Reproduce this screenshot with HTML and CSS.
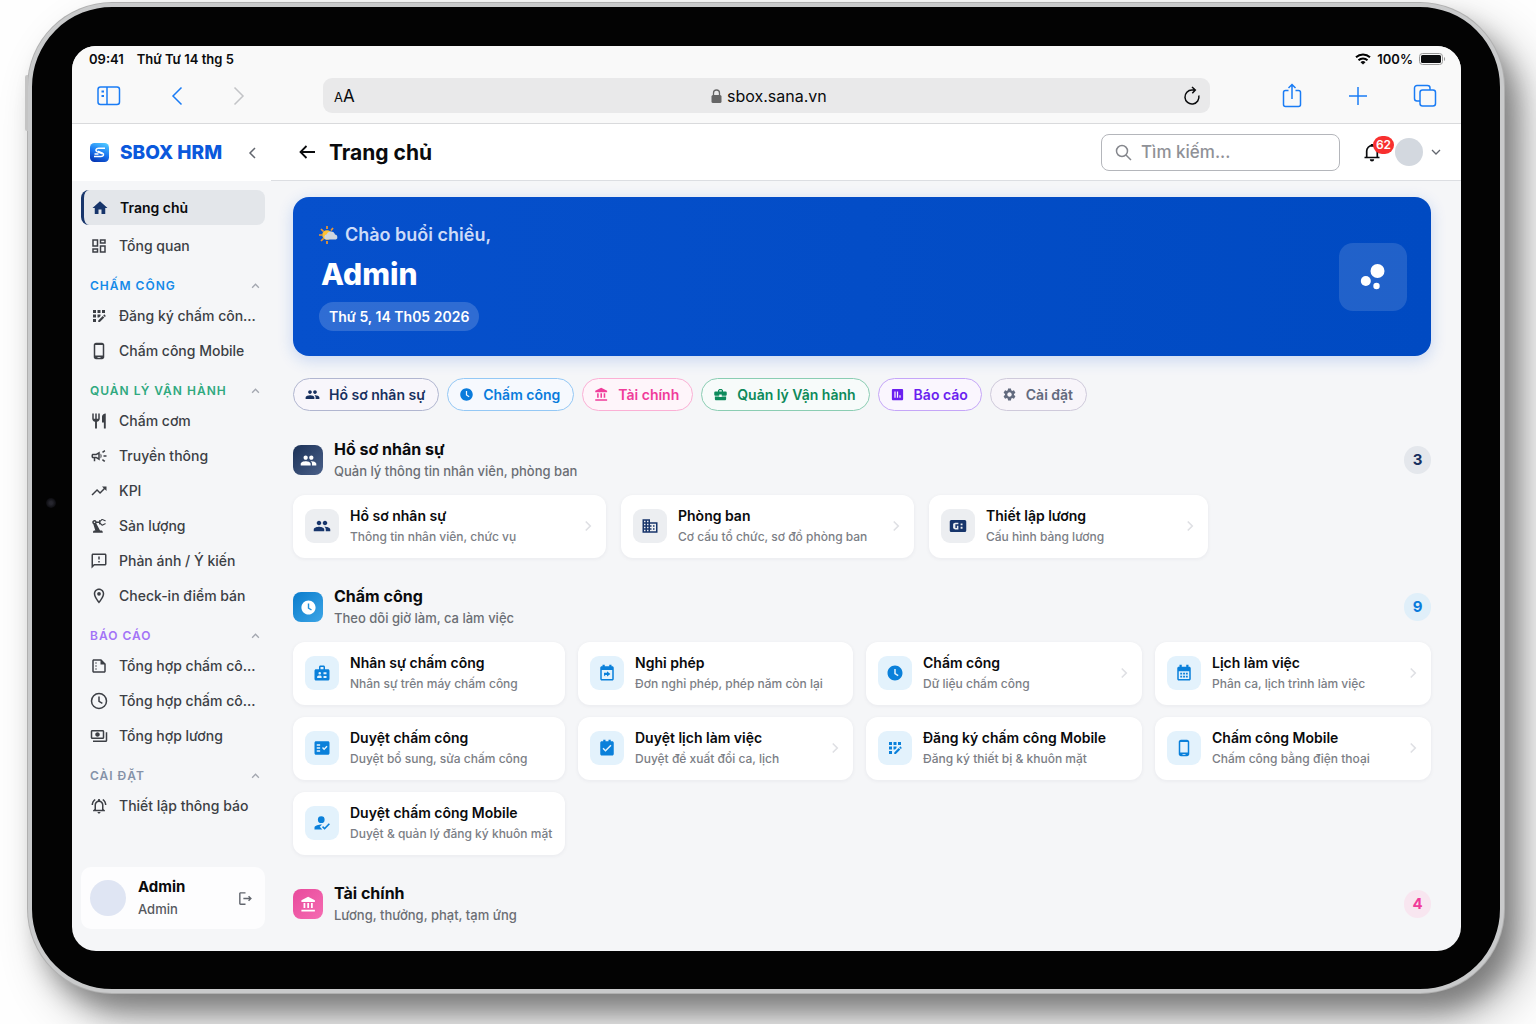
FILE: index.html
```html
<!DOCTYPE html>
<html lang="vi">
<head>
    <meta charset="UTF-8">
    <meta name="viewport" content="width=device-width, initial-scale=1.0">
    <title>SBOX HRM - Trang chủ</title>
    <link rel="stylesheet" href="styles.css">
</head>
<body>
    <!-- icon sprite -->
    <svg class="sprite" aria-hidden="true">
        <symbol id="i-home" viewBox="0 0 24 24"><path d="M10 20v-6h4v6h5v-8h3L12 3 2 12h3v8z"/></symbol>
        <symbol id="i-dashboard" viewBox="0 0 24 24"><path d="M19 5v2h-4V5h4M9 5v6H5V5h4m10 8v6h-4v-6h4M9 17v2H5v-2h4M21 3h-8v6h8V3zM11 3H3v10h8V3zm10 8h-8v10h8V11zm-10 4H3v6h8v-6z"/></symbol>
        <symbol id="i-register" viewBox="0 0 24 24"><path d="M10 4h4v4h-4zM4 16h4v4H4zM4 10h4v4H4zM4 4h4v4H4zM16 4h4v4h-4zM11 17.86V20h2.1l5.98-5.97-2.12-2.12zM14 12.03V10h-4v4h2.03zM20.85 11.56l-1.41-1.41c-.2-.2-.51-.2-.71 0l-1.06 1.06 2.12 2.12 1.06-1.06c.2-.2.2-.51 0-.71z"/></symbol>
        <symbol id="i-phone" viewBox="0 0 24 24"><path d="M16 1H8C6.34 1 5 2.34 5 4v16c0 1.66 1.34 3 3 3h8c1.66 0 3-1.34 3-3V4c0-1.66-1.34-3-3-3zm1 17H7V4h10v14zm-3 3h-4v-1h4v1z"/></symbol>
        <symbol id="i-food" viewBox="0 0 24 24"><path d="M11 9H9V2H7v7H5V2H3v7c0 2.12 1.66 3.84 3.75 3.97V22h2.5v-9.03C11.34 12.84 13 11.12 13 9V2h-2v7zm5-3v8h2.5v8H21V2c-2.76 0-5 2.24-5 4z"/></symbol>
        <symbol id="i-campaign" viewBox="0 0 24 24"><path d="M18 11v2h4v-2h-4zm-2 6.61c.96.71 2.21 1.65 3.2 2.39.4-.53.8-1.07 1.2-1.6-.99-.74-2.24-1.68-3.2-2.4-.4.54-.8 1.08-1.2 1.61zM20.4 5.6c-.4-.53-.8-1.07-1.2-1.6-.99.74-2.24 1.68-3.2 2.4.4.53.8 1.07 1.2 1.6.96-.72 2.21-1.65 3.2-2.4zM4 9c-1.1 0-2 .9-2 2v2c0 1.1.9 2 2 2h1v4h2v-4h1l5 3V6L8 9H4zm5.03 1.71L11 9.53v4.94l-1.97-1.18-.48-.29H4v-2h4.55l.48-.29zM15.5 12c0-1.33-.58-2.53-1.5-3.35v6.69c.92-.81 1.5-2.01 1.5-3.34z"/></symbol>
        <symbol id="i-trend" viewBox="0 0 24 24"><path d="M16 6l2.29 2.29-4.88 4.88-4-4L2 16.59 3.41 18l6-6 4 4 6.3-6.29L22 12V6z"/></symbol>
        <symbol id="i-robot-arm" viewBox="0 0 24 24"><path fill-rule="evenodd" d="M19.93 8.35l-3.6 1.68L14 7.7V6.3l2.33-2.33 3.6 1.68c.38.18.82.01 1-.36.18-.38.01-.82-.36-1L16.65 2.6c-.38-.18-.83-.1-1.13.2l-1.74 1.74C13.6 4.22 13.32 4 13 4c-.55 0-1 .45-1 1v1H8.82C8.4 4.84 7.3 4 6 4 4.34 4 3 5.34 3 7c0 1.1.6 2.05 1.48 2.58L7.08 18H6c-1.1 0-2 .9-2 2v1h13v-1c0-1.1-.9-2-2-2h-1.62L8.41 8.77c.17-.24.31-.49.41-.77H12v1c0 .55.45 1 1 1 .32 0 .6-.16.78-.4l1.74 1.74c.3.3.75.38 1.13.2l3.92-1.83c.38-.18.54-.62.36-1-.18-.37-.62-.54-1-.36zM6 6a1 1 0 1 1 0 2 1 1 0 0 1 0-2z"/></symbol>
        <symbol id="i-feedback" viewBox="0 0 24 24"><path d="M20 2H4c-1.1 0-2 .9-2 2v18l4-4h14c1.1 0 2-.9 2-2V4c0-1.1-.9-2-2-2zm0 14H5.17L4 17.17V4h16v12zm-9-4h2v2h-2zm0-6h2v4h-2z"/></symbol>
        <symbol id="i-place" viewBox="0 0 24 24"><path d="M12 2C8.13 2 5 5.13 5 9c0 5.25 7 13 7 13s7-7.75 7-13c0-3.87-3.13-7-7-7zM7 9c0-2.76 2.24-5 5-5s5 2.24 5 5c0 2.88-2.88 7.19-5 9.88C9.92 16.21 7 11.85 7 9z"/><circle cx="12" cy="9" r="2.5"/></symbol>
        <symbol id="i-summary" viewBox="0 0 24 24"><path d="M15 3H5c-1.1 0-2 .9-2 2v14c0 1.1.9 2 2 2h14c1.1 0 2-.9 2-2V9l-6-6zM5 19V5h9v5h5v9H5z"/><circle cx="8" cy="8" r="1"/><circle cx="8" cy="12" r="1"/><circle cx="8" cy="16" r="1"/></symbol>
        <symbol id="i-clock" viewBox="0 0 24 24"><g fill="none" stroke="currentColor" stroke-width="2"><circle cx="12" cy="12" r="10"/><path d="M12 6v6.5l4.5 2.7"/></g></symbol>
        <symbol id="i-payments" viewBox="0 0 24 24"><path d="M19 14V6c0-1.1-.9-2-2-2H3c-1.1 0-2 .9-2 2v8c0 1.1.9 2 2 2h14c1.1 0 2-.9 2-2zm-2 0H3V6h14v8zm-7-7c-1.66 0-3 1.34-3 3s1.34 3 3 3 3-1.34 3-3-1.34-3-3-3zm13 0v11c0 1.1-.9 2-2 2H4v-2h17V7h2z"/></symbol>
        <symbol id="i-alert" viewBox="0 0 24 24"><path d="M12 22c1.1 0 2-.9 2-2h-4c0 1.1.9 2 2 2zm6-6v-5c0-3.07-1.63-5.64-4.5-6.32V4c0-.83-.67-1.5-1.5-1.5s-1.5.67-1.5 1.5v.68C7.64 5.36 6 7.92 6 11v5l-2 2v1h16v-1l-2-2zm-2 1H8v-6c0-2.48 1.51-4.5 4-4.5s4 2.02 4 4.5v6zM7.58 4.08L6.15 2.65C3.75 4.48 2.17 7.3 2.03 10.5h2c.15-2.65 1.51-4.97 3.55-6.42zm12.39 6.42h2c-.15-3.2-1.73-6.02-4.12-7.85l-1.42 1.43c2.02 1.45 3.39 3.77 3.54 6.42z"/></symbol>
        <symbol id="i-logout" viewBox="0 0 24 24"><path d="M17 8l-1.41 1.41L17.17 11H9v2h8.17l-1.58 1.58L17 16l4-4-4-4zM5 5h7V3H5c-1.1 0-2 .9-2 2v14c0 1.1.9 2 2 2h7v-2H5V5z"/></symbol>
        <symbol id="i-people" viewBox="0 0 24 24"><path d="M16 11c1.66 0 2.99-1.34 2.99-3S17.66 5 16 5s-3 1.34-3 3 1.34 3 3 3zm-8 0c1.66 0 2.99-1.34 2.99-3S9.66 5 8 5 5 6.34 5 8s1.34 3 3 3zm0 2c-2.33 0-7 1.17-7 3.5V19h14v-2.5c0-2.33-4.67-3.5-7-3.5zm8 0c-.29 0-.62.02-.97.05 1.16.84 1.97 1.97 1.97 3.45V19h6v-2.5c0-2.33-4.67-3.5-7-3.5z"/></symbol>
        <symbol id="i-time" viewBox="0 0 24 24"><path fill-rule="evenodd" d="M12 2C6.5 2 2 6.5 2 12s4.5 10 10 10 10-4.5 10-10S17.5 2 12 2zm3.7 14.3L11 13.3V6.5h2v5.8l3.8 2.4z"/></symbol>
        <symbol id="i-bank" viewBox="0 0 24 24"><path d="M5 10v7h2.5v-7H5zm5.3 0v7h2.5v-7h-2.5zM2 22h19v-2.5H2V22zm13.5-12v7H18v-7h-2.5zM11.5 1L2 6v2.5h19V6l-9.5-5z"/></symbol>
        <symbol id="i-briefcase" viewBox="0 0 24 24"><path d="M10 16v-1H3v4c0 1.11.89 2 2 2h14c1.11 0 2-.89 2-2v-4h-7v1h-4zm10-9h-4V5l-2-2h-4L8 5v2H4c-1.1 0-2 .9-2 2v3c0 1.11.89 2 2 2h6v-2h4v2h6c1.1 0 2-.9 2-2V9c0-1.1-.9-2-2-2zm-6 0h-4V5h4v2z"/></symbol>
        <symbol id="i-chart" viewBox="0 0 24 24"><path d="M19 3H5c-1.1 0-2 .9-2 2v14c0 1.1.9 2 2 2h14c1.1 0 2-.9 2-2V5c0-1.1-.9-2-2-2zM9 17H7V7h2v10zm4 0h-2V7h2v10zm4 0h-2v-4h2v4z"/></symbol>
        <symbol id="i-gear" viewBox="0 0 24 24"><path d="M19.14 12.94c.04-.3.06-.61.06-.94 0-.32-.02-.64-.07-.94l2.03-1.58c.18-.14.23-.41.12-.61l-1.92-3.32c-.12-.22-.37-.29-.59-.22l-2.39.96c-.5-.38-1.03-.7-1.62-.94l-.36-2.54c-.04-.24-.24-.41-.48-.41h-3.84c-.24 0-.43.17-.47.41l-.36 2.54c-.59.24-1.13.57-1.62.94l-2.39-.96c-.22-.08-.47 0-.59.22L2.74 8.87c-.12.21-.08.47.12.61l2.03 1.58c-.05.3-.09.63-.09.94s.02.64.07.94l-2.03 1.58c-.18.14-.23.41-.12.61l1.92 3.32c.12.22.37.29.59.22l2.39-.96c.5.38 1.03.7 1.62.94l.36 2.54c.05.24.24.41.48.41h3.84c.24 0 .44-.17.47-.41l.36-2.54c.59-.24 1.13-.56 1.62-.94l2.39.96c.22.08.47 0 .59-.22l1.92-3.32c.12-.22.07-.47-.12-.61l-2.01-1.58zM12 15.6c-1.98 0-3.6-1.62-3.6-3.6s1.62-3.6 3.6-3.6 3.6 1.62 3.6 3.6-1.62 3.6-3.6 3.6z"/></symbol>
        <symbol id="i-building" viewBox="0 0 24 24"><path d="M12 7V3H2v18h20V7H12zM6 19H4v-2h2v2zm0-4H4v-2h2v2zm0-4H4V9h2v2zm0-4H4V5h2v2zm4 12H8v-2h2v2zm0-4H8v-2h2v2zm0-4H8V9h2v2zm0-4H8V5h2v2zm10 12h-8v-2h2v-2h-2v-2h2v-2h-2V9h8v10zm-2-8h-2v2h2v-2zm0 4h-2v2h2v-2z"/></symbol>
        <symbol id="i-salary" viewBox="0 0 24 24"><path fill-rule="evenodd" d="M3 4h18a2 2 0 0 1 2 2v12a2 2 0 0 1-2 2H3a2 2 0 0 1-2-2V6a2 2 0 0 1 2-2zM8 7.5L5.5 9v6L8 16.5h4.5v-5h-2v3h-2v-5h4v-2zM15.5 8.5V11H18V8.5zM15.5 13v2.5H18V13z"/></symbol>
        <symbol id="i-badge" viewBox="0 0 24 24"><path fill-rule="evenodd" d="M20 7h-4V4c0-1.1-.9-2-2-2h-4c-1.1 0-2 .9-2 2v3H4c-1.1 0-2 .9-2 2v11c0 1.1.9 2 2 2h16c1.1 0 2-.9 2-2V9c0-1.1-.9-2-2-2zm-10 0V4h4v3h-4zM9 10.5a1.7 1.7 0 1 1 0 3.4 1.7 1.7 0 0 1 0-3.4zM5.5 18.5V17c0-1 2-1.7 3.5-1.7s2.5.7 2.5 1.7v1.5zM14 11h4v2.5h-4zM14 16h4v2.5h-4z"/></symbol>
        <symbol id="i-leave" viewBox="0 0 24 24"><path fill-rule="evenodd" d="M19 3h-1V1h-3v2H9V1H6v2H5c-1.1 0-2 .9-2 2v15c0 1.1.9 2 2 2h14c1.1 0 2-.9 2-2V5c0-1.1-.9-2-2-2zm0 17H5V8h14v12z"/><path d="M8 11.5h4v-2l4.5 3.7-4.5 3.3v-2H9.5v2L8 15z"/></symbol>
        <symbol id="i-calendar" viewBox="0 0 24 24"><path fill-rule="evenodd" d="M19 3.5h-1V1h-3v2.5H9V1H6v2.5H5c-1.1 0-2 .9-2 2V20c0 1.1.9 2 2 2h14c1.1 0 2-.9 2-2V5.5c0-1.1-.9-2-2-2zM19 20H5V9.5h14V20z"/><path d="M7 11.5h2.5V14H7zM10.8 11.5h2.5V14h-2.5zM14.500 11.500H17V14h-2.500zM7 15.500h2.500V18H7zM10.800 15.500h2.500V18h-2.500zM14.500 15.500H17V18h-2.500z"/></symbol>
        <symbol id="i-fact" viewBox="0 0 24 24"><path fill-rule="evenodd" d="M20 3H4c-1.1 0-2 .9-2 2v14c0 1.1.9 2 2 2h16c1.1 0 2-.9 2-2V5c0-1.1-.9-2-2-2zM9.5 17H5v-2h4.5v2zm0-4H5v-2h4.5v2zm0-4H5V7h4.5v2zm5.320 6L12 12.160l1.410-1.410 1.410 1.420L17.990 9l1.420 1.420L14.820 15z"/></symbol>
        <symbol id="i-approved" viewBox="0 0 24 24"><path d="M19 3h-2V1h-3v2h-4V1H7v2H5c-1.1 0-2 .9-2 2v15c0 1.1.9 2 2 2h14c1.1 0 2-.9 2-2V5c0-1.1-.9-2-2-2zm-9 14l-4-4 1.410-1.410L10 14.170l6.590-6.590L18 9l-8 8z"/></symbol>
        <symbol id="i-user-check" viewBox="0 0 24 24"><circle cx="11" cy="7.5" r="4.5"/><path d="M9 17l3-2.940c-.39-.04-.68-.06-1-.06-2.670 0-9 1.340-9 4v2.500h10.500L9 17zm6.470 4L12 17.500l1.400-1.600 2.070 2.080L21 12.200l1.600 1.500z"/></symbol>
        <symbol id="i-chevron" viewBox="0 0 10 16"><path d="M2 2l6 6-6 6" fill="none" stroke="currentColor" stroke-width="2.2"/></symbol>
        <symbol id="i-up" viewBox="0 0 16 10"><path d="M2 8l6-6 6 6" fill="none" stroke="currentColor" stroke-width="2.4"/></symbol>
    </svg>

    <div class="device">
        <div class="screen">
            <div class="status-bar">
                <span>09:41</span>
                <span>Thứ Tư 14 thg 5</span>
                <span class="status-right">
                    <svg class="wifi" viewBox="0 0 16 12"><path d="M1 4.300a10.200 10.200 0 0 1 14 0M3.500 7.200a6.600 6.600 0 0 1 9 0" fill="none" stroke="#000" stroke-width="2"/><path d="M8 11.500L5.500 9.200a3.700 3.700 0 0 1 5 0z"/></svg>
                    100%
                    <svg class="battery" viewBox="0 0 27 12"><rect x=".5" y=".5" width="23" height="11" rx="3" fill="none" stroke="#999"/><rect x="2" y="2" width="20" height="8" rx="1.500"/><path d="M25 4v4c1.500-.6 1.500-3.400 0-4z" fill="#999"/></svg>
                </span>
            </div>

            <div class="browser-bar">
                <div class="browser-nav">
                    <button class="icon-btn" aria-label="Thanh bên"><svg width="24" height="20" viewBox="0 0 24 20"><g fill="none" stroke="currentColor" stroke-width="1.500"><rect x="1" y="1" width="21.500" height="17.500" rx="2.500"/><path d="M10 1v17.500"/></g><path d="M4.500 4.500h2.500v2H4.500zM4.500 9h2.500v2H4.500z"/></svg></button>
                    <button class="icon-btn" aria-label="Quay lại"><svg width="12" height="20" viewBox="0 0 12 20"><path d="M10.500 1.500L2 10l8.500 8.500" fill="none" stroke="currentColor" stroke-width="1.500"/></svg></button>
                    <button class="icon-btn muted" aria-label="Tiếp"><svg width="12" height="20" viewBox="0 0 12 20"><path d="M1.500 1.500L10 10l-8.500 8.500" fill="none" stroke="currentColor" stroke-width="1.500"/></svg></button>
                </div>
                <div class="address-bar">
                    <button class="text-size" aria-label="Cỡ chữ"><small>A</small>A</button>
                    <button class="address">
                        <svg width="11" height="14" viewBox="0 0 11 14"><rect x=".5" y="6" width="10" height="8" rx="1.500" fill="#666"/><path d="M2.500 6.500V4a3 3 0 0 1 6 0v2.500" fill="none" stroke="#666" stroke-width="1.300"/></svg>
                        sbox.sana.vn
                    </button>
                    <button class="icon-btn dark" aria-label="Tải lại"><svg width="18" height="20" viewBox="0 0 18 20"><path d="M15.800 9.500A7 7 0 1 1 9 4h3M9 1l3.300 3L9.300 7.200" fill="none" stroke="currentColor" stroke-width="1.500"/></svg></button>
                </div>
                <div class="browser-actions">
                    <button class="icon-btn" aria-label="Chia sẻ"><svg width="20" height="25" viewBox="0 0 20 25"><path d="M6.500 7.500H3.500a2 2 0 0 0-2 2v12a2 2 0 0 0 2 2h13a2 2 0 0 0 2-2v-12a2 2 0 0 0-2-2h-3M10 16V1.500M6.500 5L10 1.500 13.500 5" fill="none" stroke="currentColor" stroke-width="1.500"/></svg></button>
                    <button class="icon-btn" aria-label="Thẻ mới"><svg width="18" height="18" viewBox="0 0 18 18"><path d="M9 0v18M0 9h18" fill="none" stroke="currentColor" stroke-width="1.500"/></svg></button>
                    <button class="icon-btn" aria-label="Các thẻ"><svg width="24" height="24" viewBox="0 0 24 24"><g fill="none" stroke="currentColor" stroke-width="1.500"><rect x="7" y="6" width="15.500" height="16" rx="2.500"/><path d="M7 17H4a2.500 2.500 0 0 1-2.500-2.500V4A2.500 2.500 0 0 1 4 1.500h10.500A2.500 2.500 0 0 1 17 4v2"/></g></svg></button>
                </div>
            </div>

            <div class="app">
                <aside class="sidebar">
                    <div class="brand">
                        <svg class="logo" viewBox="0 0 19 19">
                            <defs><linearGradient id="logo-fill" x1=".7" y1="0" x2=".3" y2="1"><stop offset="0" stop-color="#4cc4ff"/><stop offset=".5" stop-color="#1b78f2"/><stop offset="1" stop-color="#0637b5"/></linearGradient></defs>
                            <rect width="19" height="19" rx="4.500" fill="url(#logo-fill)"/>
                            <path d="M15 5.200H8.500C6 5.200 5 7.600 7 8.600l5.500 2.200M4 13.500h7c2.600 0 3.400-2.300 1.500-3.300L8 8.200M4.500 11h4" fill="none" stroke="#fff" stroke-width="1.500"/>
                        </svg>
                        <span class="brand-name">SBOX HRM</span>
                        <button class="icon-btn gray" aria-label="Thu gọn"><svg width="8" height="12" viewBox="0 0 8 12"><path d="M7 1L2 6l5 5" fill="none" stroke="currentColor" stroke-width="1.500"/></svg></button>
                    </div>

                    <nav class="menu">
                        <a class="menu-item active" href="#"><svg><use href="#i-home"/></svg>Trang chủ</a>
                        <a class="menu-item" href="#"><svg><use href="#i-dashboard"/></svg>Tổng quan</a>

                        <button class="menu-group blue">CHẤM CÔNG<svg><use href="#i-up"/></svg></button>
                        <a class="menu-item" href="#"><svg><use href="#i-register"/></svg>Đăng ký chấm côn...</a>
                        <a class="menu-item" href="#"><svg><use href="#i-phone"/></svg>Chấm công Mobile</a>

                        <button class="menu-group green">QUẢN LÝ VẬN HÀNH<svg><use href="#i-up"/></svg></button>
                        <a class="menu-item" href="#"><svg><use href="#i-food"/></svg>Chấm cơm</a>
                        <a class="menu-item" href="#"><svg><use href="#i-campaign"/></svg>Truyền thông</a>
                        <a class="menu-item" href="#"><svg><use href="#i-trend"/></svg>KPI</a>
                        <a class="menu-item" href="#"><svg><use href="#i-robot-arm"/></svg>Sản lượng</a>
                        <a class="menu-item" href="#"><svg><use href="#i-feedback"/></svg>Phản ánh / Ý kiến</a>
                        <a class="menu-item" href="#"><svg><use href="#i-place"/></svg>Check-in điểm bán</a>

                        <button class="menu-group purple">BÁO CÁO<svg><use href="#i-up"/></svg></button>
                        <a class="menu-item" href="#"><svg><use href="#i-summary"/></svg>Tổng hợp chấm cô...</a>
                        <a class="menu-item" href="#"><svg><use href="#i-clock"/></svg>Tổng hợp chấm cô...</a>
                        <a class="menu-item" href="#"><svg><use href="#i-payments"/></svg>Tổng hợp lương</a>

                        <button class="menu-group slate">CÀI ĐẶT<svg><use href="#i-up"/></svg></button>
                        <a class="menu-item" href="#"><svg><use href="#i-alert"/></svg>Thiết lập thông báo</a>
                    </nav>

                    <div class="user-card">
                        <span class="avatar large"></span>
                        <div class="user-info">
                            <strong>Admin</strong>
                            <span>Admin</span>
                        </div>
                        <button class="icon-btn gray" aria-label="Đăng xuất"><svg width="17" height="17"><use href="#i-logout"/></svg></button>
                    </div>
                </aside>

                <main class="main">
                    <header class="topbar">
                        <button class="icon-btn dark" aria-label="Quay lại"><svg width="16" height="14" viewBox="0 0 16 14"><path d="M7.500 1L1.500 7l6 6M1.500 7H16" fill="none" stroke="currentColor" stroke-width="1.800"/></svg></button>
                        <h1>Trang chủ</h1>
                        <label class="search">
                            <svg width="17" height="17" viewBox="0 0 17 17"><g fill="none" stroke="currentColor" stroke-width="1.500"><circle cx="7" cy="7" r="5.500"/><path d="M11 11l5 5"/></g></svg>
                            <input type="text" placeholder="Tìm kiếm..." aria-label="Tìm kiếm">
                        </label>
                        <button class="icon-btn dark bell" aria-label="Thông báo">
                            <svg width="18" height="20" viewBox="0 0 18 20"><path d="M1.500 15.500h15M3.700 15V9a5.300 5.300 0 0 1 10.600 0v6" fill="none" stroke="currentColor" stroke-width="1.700"/><path d="M7.800 2h2.400v2.500H7.800zM6.800 17.300h4.400a2.200 2.200 0 0 1-4.400 0z"/></svg>
                            <span class="bell-count">62</span>
                        </button>
                        <span class="avatar"></span>
                        <button class="icon-btn gray" aria-label="Tài khoản"><svg width="10" height="6" viewBox="0 0 10 6"><path d="M1 1l4 4 4-4" fill="none" stroke="currentColor" stroke-width="1.300"/></svg></button>
                    </header>

                    <div class="content">
                        <section class="banner">
                            <div>
                                <p class="greeting">
                                    <svg width="20" height="18" viewBox="0 0 20 18"><g stroke="#f0962e" stroke-width="1.700"><path d="M8 0v3M2 3l2.500 2.500M0 9h3M2 15l2.500-2.500M8 18v-3M14 2l-2 2.500"/></g><circle cx="8" cy="9" r="4.800" fill="#ffc233"/><path d="M7 13.500a2.700 2.700 0 0 1 .8-5.200A4.300 4.300 0 0 1 16 8.600a2.600 2.600 0 0 1 1 4.900z" fill="#cfd6de"/></svg>
                                    Chào buổi chiều,
                                </p>
                                <h2>Admin</h2>
                                <span class="date-pill">Thứ 5, 14 Th05 2026</span>
                            </div>
                            <div class="banner-tile">
                                <svg width="28" height="28" viewBox="0 0 28 28"><circle cx="18.500" cy="8" r="7"/><circle cx="6.800" cy="18" r="5"/><circle cx="17.500" cy="23" r="3.200"/></svg>
                            </div>
                        </section>

                        <div class="chips">
                            <button class="chip navy"><svg><use href="#i-people"/></svg>Hồ sơ nhân sự</button>
                            <button class="chip blue"><svg><use href="#i-time"/></svg>Chấm công</button>
                            <button class="chip pink"><svg><use href="#i-bank"/></svg>Tài chính</button>
                            <button class="chip green"><svg><use href="#i-briefcase"/></svg>Quản lý Vận hành</button>
                            <button class="chip purple"><svg><use href="#i-chart"/></svg>Báo cáo</button>
                            <button class="chip slate"><svg><use href="#i-gear"/></svg>Cài đặt</button>
                        </div>

                        <section class="group navy">
                            <div class="group-head">
                                <span class="group-icon"><svg><use href="#i-people"/></svg></span>
                                <div>
                                    <h3>Hồ sơ nhân sự</h3>
                                    <p>Quản lý thông tin nhân viên, phòng ban</p>
                                </div>
                                <span class="count">3</span>
                            </div>
                            <div class="cards profile-cards">
                                <a class="card" href="#">
                                    <span class="card-icon"><svg><use href="#i-people"/></svg></span>
                                    <span class="card-text"><strong>Hồ sơ nhân sự</strong><span>Thông tin nhân viên, chức vụ</span></span>
                                    <svg class="go"><use href="#i-chevron"/></svg>
                                </a>
                                <a class="card" href="#">
                                    <span class="card-icon"><svg><use href="#i-building"/></svg></span>
                                    <span class="card-text"><strong>Phòng ban</strong><span>Cơ cấu tổ chức, sơ đồ phòng ban</span></span>
                                    <svg class="go"><use href="#i-chevron"/></svg>
                                </a>
                                <a class="card" href="#">
                                    <span class="card-icon"><svg><use href="#i-salary"/></svg></span>
                                    <span class="card-text"><strong>Thiết lập lương</strong><span>Cấu hình bảng lương</span></span>
                                    <svg class="go"><use href="#i-chevron"/></svg>
                                </a>
                            </div>
                        </section>

                        <section class="group blue">
                            <div class="group-head">
                                <span class="group-icon"><svg><use href="#i-time"/></svg></span>
                                <div>
                                    <h3>Chấm công</h3>
                                    <p>Theo dõi giờ làm, ca làm việc</p>
                                </div>
                                <span class="count">9</span>
                            </div>
                            <div class="cards">
                                <a class="card" href="#">
                                    <span class="card-icon"><svg><use href="#i-badge"/></svg></span>
                                    <span class="card-text"><strong>Nhân sự chấm công</strong><span>Nhân sự trên máy chấm công</span></span>
                                </a>
                                <a class="card" href="#">
                                    <span class="card-icon"><svg><use href="#i-leave"/></svg></span>
                                    <span class="card-text"><strong>Nghỉ phép</strong><span>Đơn nghỉ phép, phép năm còn lại</span></span>
                                </a>
                                <a class="card" href="#">
                                    <span class="card-icon"><svg><use href="#i-time"/></svg></span>
                                    <span class="card-text"><strong>Chấm công</strong><span>Dữ liệu chấm công</span></span>
                                    <svg class="go"><use href="#i-chevron"/></svg>
                                </a>
                                <a class="card" href="#">
                                    <span class="card-icon"><svg><use href="#i-calendar"/></svg></span>
                                    <span class="card-text"><strong>Lịch làm việc</strong><span>Phân ca, lịch trình làm việc</span></span>
                                    <svg class="go"><use href="#i-chevron"/></svg>
                                </a>
                                <a class="card" href="#">
                                    <span class="card-icon"><svg><use href="#i-fact"/></svg></span>
                                    <span class="card-text"><strong>Duyệt chấm công</strong><span>Duyệt bổ sung, sửa chấm công</span></span>
                                </a>
                                <a class="card" href="#">
                                    <span class="card-icon"><svg><use href="#i-approved"/></svg></span>
                                    <span class="card-text"><strong>Duyệt lịch làm việc</strong><span>Duyệt đề xuất đổi ca, lịch</span></span>
                                    <svg class="go"><use href="#i-chevron"/></svg>
                                </a>
                                <a class="card" href="#">
                                    <span class="card-icon"><svg><use href="#i-register"/></svg></span>
                                    <span class="card-text"><strong>Đăng ký chấm công Mobile</strong><span>Đăng ký thiết bị &amp; khuôn mặt</span></span>
                                </a>
                                <a class="card" href="#">
                                    <span class="card-icon"><svg><use href="#i-phone"/></svg></span>
                                    <span class="card-text"><strong>Chấm công Mobile</strong><span>Chấm công bằng điện thoại</span></span>
                                    <svg class="go"><use href="#i-chevron"/></svg>
                                </a>
                                <a class="card" href="#">
                                    <span class="card-icon"><svg><use href="#i-user-check"/></svg></span>
                                    <span class="card-text"><strong>Duyệt chấm công Mobile</strong><span>Duyệt &amp; quản lý đăng ký khuôn mặt</span></span>
                                </a>
                            </div>
                        </section>

                        <section class="group pink">
                            <div class="group-head">
                                <span class="group-icon"><svg><use href="#i-bank"/></svg></span>
                                <div>
                                    <h3>Tài chính</h3>
                                    <p>Lương, thưởng, phạt, tạm ứng</p>
                                </div>
                                <span class="count">4</span>
                            </div>
                        </section>
                    </div>
                </main>
            </div>
        </div>
    </div>
</body>
</html>
```
FILE: styles.css
```css
* {
    box-sizing: border-box;
}
body {
    margin: 0;
    height: 100vh;
    padding: 3px 32px 31px 28px;
    display: flex;
    overflow: hidden;
    background: #fefefe;
    font-family: Inter, "Noto Sans", sans-serif;
    color: #0a0b0d;
}
h1, h2, h3, p {
    margin: 0;
}
a {
    color: inherit;
    text-decoration: none;
}
button {
    padding: 0;
    border: none;
    background: none;
    font: inherit;
    color: inherit;
    cursor: pointer;
}
svg {
    fill: currentColor;
    flex-shrink: 0;
}
.sprite {
    position: absolute;
    width: 0;
    height: 0;
}

/* tablet frame */
.device {
    position: relative;
    flex: 1;
    display: flex;
    padding: 39px 39px 38px 40px;
    background: #030303;
    border: 4px solid #c9cacb;
    border-radius: 84px;
    box-shadow: 0 0 0 1px #b0b0b0, 12px 18px 24px rgba(0, 0, 0, 0.32), 22px 26px 50px rgba(0, 0, 0, 0.3);
}
/* side button */
.device::before {
    content: "";
    position: absolute;
    left: -7px;
    top: 68px;
    width: 3px;
    height: 56px;
    background: #c4c4c4;
    border-radius: 2px 0 0 2px;
}
/* camera */
.device::after {
    content: "";
    position: absolute;
    left: 14px;
    top: 50%;
    width: 10px;
    height: 10px;
    border-radius: 50%;
    background: radial-gradient(#26262e 20%, #0c0c10 70%);
}
.screen {
    flex: 1;
    min-width: 0;
    display: flex;
    flex-direction: column;
    overflow: hidden;
    border-radius: 24px;
    background: #f5f6f8;
}

/* browser chrome */
.status-bar {
    display: flex;
    align-items: center;
    gap: 13px;
    height: 26px;
    padding: 0 15px 0 17px;
    background: #f9f9f9;
    font-size: 13px;
    font-weight: 600;
}
.status-right {
    margin-left: auto;
    display: flex;
    align-items: center;
    gap: 6px;
}
.wifi {
    width: 16px;
    height: 12px;
}
.battery {
    width: 27px;
    height: 12px;
}
.browser-bar {
    display: flex;
    align-items: center;
    height: 52px;
    padding: 0 24px 4px 25px;
    background: #f9f9f9;
    border-bottom: 1px solid #d9dadc;
    color: #1a7cf5;
}
.browser-nav, .browser-actions {
    display: flex;
    align-items: center;
    justify-content: space-between;
}
.browser-nav {
    flex: 148;
}
.browser-actions {
    flex: 155;
}
.address-bar {
    flex: 867;
    display: flex;
    align-items: center;
    justify-content: space-between;
    height: 35px;
    margin: 0 72px 0 78px;
    padding: 0 9px 0 11px;
    border-radius: 9px;
    background: #e9e9ea;
    color: #0a0b0d;
}
.text-size {
    font-size: 17px;
}
.text-size small {
    font-size: 13px;
}
.address {
    display: flex;
    align-items: center;
    gap: 5px;
    font-size: 16px;
}
.icon-btn {
    display: flex;
    align-items: center;
    justify-content: center;
}
.icon-btn.muted {
    color: #c3c4c7;
}
.icon-btn.dark {
    color: #0a0b0d;
}
.icon-btn.gray {
    color: #62666e;
}

/* layout */
.app {
    flex: 1;
    min-height: 0;
    display: grid;
    grid-template-columns: 199px 1fr;
}
.sidebar {
    display: flex;
    flex-direction: column;
    min-height: 0;
}
.main {
    min-width: 0;
    min-height: 0;
    display: flex;
    flex-direction: column;
}

/* sidebar */
.brand {
    display: flex;
    align-items: center;
    height: 57px;
    padding: 0 15px 0 18px;
    background: #fff;
}
.logo {
    width: 19px;
    height: 19px;
}
.brand-name {
    flex: 1;
    padding-left: 11px;
    font-size: 19px;
    font-weight: 800;
    color: #0a58dc;
}
.menu {
    flex: 1;
    padding: 9px 6px 0 9px;
}
.menu-item {
    display: flex;
    align-items: center;
    gap: 11px;
    height: 35px;
    padding-left: 9px;
    font-size: 14px;
    font-weight: 500;
    color: #3c3f45;
    white-space: nowrap;
}
.menu-item svg {
    width: 18px;
    height: 18px;
}
.menu-item.active {
    margin-bottom: 3px;
    padding-left: 7px;
    border-left: 3px solid #17356b;
    border-radius: 8px;
    background: #e3e6ea;
    color: #0a0b0d;
    font-weight: 600;
}
.menu-item.active svg {
    color: #17356b;
}
.menu-group {
    display: flex;
    align-items: center;
    justify-content: space-between;
    width: 100%;
    height: 35px;
    padding: 10px 5px 0 9px;
    font-size: 12px;
    font-weight: 600;
    letter-spacing: 1px;
}
.menu-group svg {
    width: 9px;
    height: 6px;
    color: #a3a7b0;
}
.menu-group.blue {
    color: #148ae8;
}
.menu-group.green {
    color: #2fa97f;
}
.menu-group.purple {
    color: #a373f7;
}
.menu-group.slate {
    color: #8592a8;
}
.user-card {
    display: flex;
    align-items: center;
    gap: 12px;
    height: 62px;
    margin: 0 6px 22px 9px;
    padding: 0 11px 0 9px;
    border-radius: 10px;
    background: #fdfdfe;
}
.user-info {
    flex: 1;
    display: flex;
    flex-direction: column;
    gap: 4px;
    font-size: 13px;
    font-weight: 500;
    line-height: 18px;
    color: #55585e;
}
.user-info strong {
    font-size: 15px;
    font-weight: 700;
    color: #0a0b0d;
}
.avatar {
    width: 28px;
    height: 28px;
    border-radius: 50%;
    background: #d3d8df;
}
.avatar.large {
    width: 36px;
    height: 36px;
    background: #dfe5f3;
}

/* top bar */
.topbar {
    display: flex;
    align-items: center;
    height: 57px;
    padding: 0 20px 0 28px;
    background: #fff;
    border-bottom: 1px solid #dcdee2;
}
.topbar h1 {
    flex: 1;
    padding-left: 14px;
    font-size: 21px;
    font-weight: 700;
}
.search {
    display: flex;
    align-items: center;
    gap: 9px;
    width: 239px;
    height: 37px;
    padding: 0 13px;
    border: 1px solid #b4b6bb;
    border-radius: 8px;
    color: #85878d;
}
.search input {
    flex: 1;
    min-width: 0;
    padding: 0;
    border: none;
    outline: none;
    background: none;
    font: 500 17px Inter, "Noto Sans", sans-serif;
    color: #0a0b0d;
}
.search input::placeholder {
    color: #8f9197;
}
.bell {
    position: relative;
    margin: 0 14px 0 23px;
}
.bell-count {
    position: absolute;
    left: 10px;
    top: -6px;
    width: 21px;
    height: 18px;
    border-radius: 9px;
    background: #f8302f;
    color: #fff;
    font-size: 12px;
    font-weight: 600;
    line-height: 18px;
    text-align: center;
}
.topbar .avatar {
    margin-right: 8px;
}

/* content */
.content {
    flex: 1;
    min-height: 0;
    overflow: hidden;
    padding: 16px 30px 0 22px;
}
.banner {
    display: flex;
    align-items: center;
    justify-content: space-between;
    height: 159px;
    padding: 0 24px 0 26px;
    border-radius: 16px;
    background: linear-gradient(90deg, #0650cc, #004ac2);
    box-shadow: 0 4px 16px rgba(20, 90, 220, 0.2);
    color: #fff;
}
.greeting {
    display: flex;
    align-items: center;
    gap: 6px;
    font-size: 18px;
    font-weight: 600;
    line-height: 24px;
    color: #cddcf8;
}
.banner h2 {
    margin: 8px 0 9px 2px;
    font-size: 30px;
    font-weight: 800;
    line-height: 38px;
}
.date-pill {
    display: inline-block;
    padding: 0 10px;
    border-radius: 15px;
    background: rgba(255, 255, 255, 0.17);
    font-size: 14px;
    font-weight: 600;
    line-height: 29px;
}
.banner-tile {
    display: flex;
    align-items: center;
    justify-content: center;
    width: 68px;
    height: 68px;
    border-radius: 14px;
    background: rgba(255, 255, 255, 0.13);
}

.chips {
    display: flex;
    gap: 8px;
    margin-top: 22px;
}
.chip {
    display: flex;
    align-items: center;
    gap: 9px;
    height: 33px;
    padding: 0 13px 0 11px;
    border: 1px solid;
    border-radius: 17px;
    font-size: 14px;
    font-weight: 600;
    white-space: nowrap;
}
.chip svg {
    width: 15px;
    height: 15px;
}
.chip.navy {
    color: #17305f;
    border-color: #b1b6d0;
    background: #f8f6fb;
}
.chip.blue {
    color: #0a7cdc;
    border-color: #94c8f5;
    background: #f6f9fe;
}
.chip.pink {
    color: #f03c9a;
    border-color: #fbb0d5;
    background: #fef5fa;
}
.chip.green {
    color: #0d8a5b;
    border-color: #8bcdb3;
    background: #f7fbfa;
}
.chip.purple {
    color: #6a1ff0;
    border-color: #c5a6f8;
    background: #faf6fe;
}
.chip.slate {
    color: #626a7e;
    border-color: #cfcadb;
    background: #f8f5fa;
}

/* groups */
.group {
    margin-top: 27px;
}
.group-head {
    display: flex;
    align-items: center;
    gap: 11px;
    height: 44px;
    margin-bottom: 13px;
}
.group-head h3 {
    font-size: 16px;
    font-weight: 700;
    line-height: 22px;
}
.group-head p {
    font-size: 13px;
    font-weight: 500;
    line-height: 22px;
    color: #6b6e74;
}
.group-icon {
    display: flex;
    align-items: center;
    justify-content: center;
    width: 30px;
    height: 30px;
    border-radius: 8px;
    color: #fff;
}
.group-icon svg {
    width: 17px;
    height: 17px;
}
.count {
    margin-left: auto;
    width: 27px;
    border-radius: 14px;
    font-size: 15px;
    font-weight: 700;
    line-height: 28px;
    text-align: center;
}
.cards {
    display: grid;
    grid-template-columns: 272fr 275fr 276fr 276fr;
    gap: 12px 13px;
}
.profile-cards {
    grid-template-columns: 313fr 293fr 279fr 208fr;
    column-gap: 15px;
}
.card {
    display: flex;
    align-items: center;
    gap: 11px;
    min-width: 0;
    height: 63px;
    padding: 0 14px 2px 12px;
    border-radius: 12px;
    background: #fff;
    box-shadow: 0 1px 4px rgba(30, 40, 70, 0.06);
    white-space: nowrap;
}
.card-icon {
    display: flex;
    align-items: center;
    justify-content: center;
    width: 34px;
    height: 34px;
    border-radius: 9px;
}
.card-icon svg {
    width: 18px;
    height: 18px;
}
.card-text {
    flex: 1;
    min-width: 0;
    display: flex;
    flex-direction: column;
    font-size: 12px;
    font-weight: 500;
    line-height: 21px;
    color: #7b7e85;
}
.card-text strong {
    font-size: 14px;
    font-weight: 600;
    color: #0a0b0d;
}
.go {
    width: 8px;
    height: 12px;
    color: #dfe0e4;
}

.group.navy .group-icon {
    background: linear-gradient(135deg, #1b3157, #4a6089);
}
.group.navy .card-icon {
    background: #eceef1;
    color: #17356b;
}
.group.navy .count {
    background: #e4e7ec;
    color: #17305f;
}
.group.blue .group-icon {
    background: linear-gradient(135deg, #0a7ccc, #3ca5e6);
}
.group.blue .card-icon {
    background: #e3f2fc;
    color: #0a80da;
}
.group.blue .count {
    background: #e0eff9;
    color: #0a7cdc;
}
.group.pink .group-icon {
    background: linear-gradient(135deg, #e84a9c, #f56cb2);
}
.group.pink .count {
    background: #f8e6f0;
    color: #f03c9a;
}
```
